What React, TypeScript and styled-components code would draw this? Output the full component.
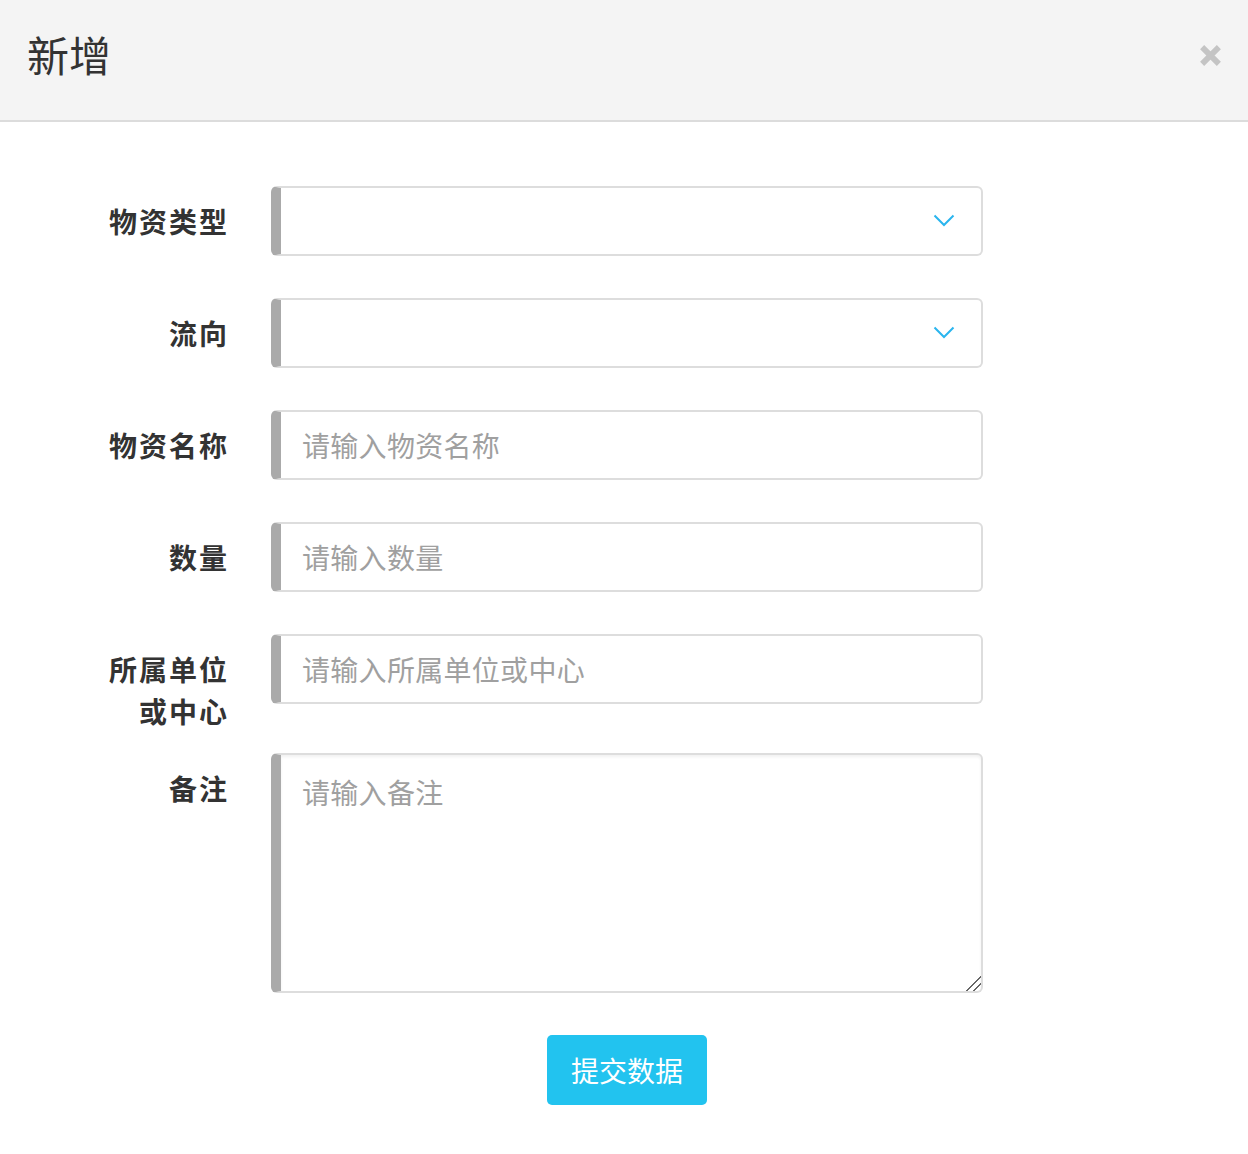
import styled, { createGlobalStyle } from "styled-components";

const GlobalStyle = createGlobalStyle`
  html, body {
    margin: 0;
    padding: 0;
    background: #fff;
    font-family: "Noto Sans CJK SC", "Noto Sans", sans-serif;
    color: #333;
  }
  * { box-sizing: border-box; }
`;

const Header = styled.div`
  height: 122px;
  background: #f4f4f4;
  border-bottom: 2px solid #dcdcdc;
  display: flex;
  align-items: center;
  justify-content: space-between;
  padding: 0 24px 0 27px;
`;

const Title = styled.h2`
  margin: 0;
  font-size: 42px;
  font-weight: 400;
  color: #333;
  line-height: 1;
  margin-top: -12px;
`;

const CloseButton = styled.button`
  border: none;
  background: none;
  padding: 0;
  width: 28px;
  height: 28px;
  display: flex;
  align-items: center;
  justify-content: center;
  cursor: pointer;
  margin-top: -10px;
`;

const Form = styled.form`
  padding: 64px 0 0 0;
  display: flex;
  flex-direction: column;
`;

const Row = styled.div`
  display: flex;
  align-items: flex-start;
  gap: 42px;
  margin-bottom: 42px;
`;

const Label = styled.label`
  width: 229px;
  flex-shrink: 0;
  text-align: right;
  font-size: 28px;
  font-weight: 700;
  line-height: 42px;
  letter-spacing: 2px;
  padding-top: 14px;
  margin-bottom: -21px;
  color: #333;
`;

const FieldBox = styled.div`
  position: relative;
  width: 712px;
`;

const fieldCss = `
  width: 712px;
  border: 2px solid #dddddd;
  border-left: 10px solid #aaaaaa;
  border-radius: 6px;
  background: #fff;
  font-family: "Noto Sans CJK SC", "Noto Sans", sans-serif;
  font-size: 28px;
  letter-spacing: 0.3px;
  color: #333;
  outline: none;
  &::placeholder { color: #a0a0a0; }
`;

const Input = styled.input`
  ${fieldCss}
  height: 70px;
  padding: 0 21px;
`;

const Select = styled.select`
  ${fieldCss}
  height: 70px;
  padding: 0 21px;
  appearance: none;
`;

const Chevron = styled.svg`
  position: absolute;
  right: 28px;
  top: 28px;
  pointer-events: none;
`;

const TextArea = styled.textarea`
  ${fieldCss}
  height: 240px;
  padding: 16px 21px;
  resize: vertical;
  box-shadow: inset 0 2px 3px rgba(0, 0, 0, 0.06);
  line-height: 42px;

  &::-webkit-resizer {
    width: 18px;
    height: 18px;
    background:
      linear-gradient(135deg, transparent 0 48%, #666 48% 56%, transparent 56% 70%, #666 70% 78%, transparent 78%);
  }
`;

const Actions = styled.div`
  display: flex;
  justify-content: center;
`;

const SubmitButton = styled.button`
  width: 160px;
  height: 70px;
  border: none;
  border-radius: 5px;
  background: #22c3ef;
  color: #fff;
  font-family: "Noto Sans CJK SC", "Noto Sans", sans-serif;
  font-size: 28px;
  cursor: pointer;
  margin-left: 6px;
`;

function SelectField() {
  return (
    <FieldBox>
      <Select defaultValue="">
        <option value=""></option>
      </Select>
      <Chevron width="22" height="14" viewBox="0 0 22 14">
        <path d="M1.5 1.5 L11 11 L20.5 1.5" fill="none" stroke="#2ab5ee" strokeWidth="2" />
      </Chevron>
    </FieldBox>
  );
}

export default function App() {
  return (
    <>
      <GlobalStyle />
      <Header>
        <Title>新增</Title>
        <CloseButton aria-label="关闭">
          <svg width="23" height="23" viewBox="0 0 22 22">
            <path d="M3 3 L19 19 M19 3 L3 19" stroke="#c4c4c4" strokeWidth="5.5" />
          </svg>
        </CloseButton>
      </Header>
      <Form onSubmit={(e) => e.preventDefault()}>
        <Row>
          <Label>物资类型</Label>
          <SelectField />
        </Row>
        <Row>
          <Label>流向</Label>
          <SelectField />
        </Row>
        <Row>
          <Label>物资名称</Label>
          <Input placeholder="请输入物资名称" />
        </Row>
        <Row>
          <Label>数量</Label>
          <Input placeholder="请输入数量" />
        </Row>
        <Row>
          <Label>
            所属单位
            <br />
            或中心
          </Label>
          <Input placeholder="请输入所属单位或中心" />
        </Row>
        <Row>
          <Label>备注</Label>
          <TextArea placeholder="请输入备注" />
        </Row>
        <Actions>
          <SubmitButton type="submit">提交数据</SubmitButton>
        </Actions>
      </Form>
    </>
  );
}
